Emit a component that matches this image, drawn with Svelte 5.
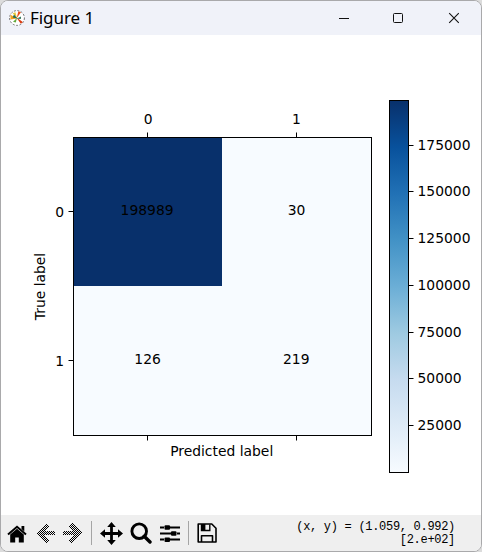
<script>
  const bars = [
    { y: 145.5, label: '175000' },
    { y: 191.5, label: '150000' },
    { y: 238.5, label: '125000' },
    { y: 285.5, label: '100000' },
    { y: 332.5, label: '75000' },
    { y: 378.5, label: '50000' },
    { y: 425.5, label: '25000' }
  ];
  const cells = [
    { x: 147.1, y: 215, v: '198989' },
    { x: 296.5, y: 215, v: '30' },
    { x: 147.6, y: 364, v: '126' },
    { x: 296.3, y: 364, v: '219' }
  ];
  const blues = ['#08306b', '#08519c', '#2171b5', '#4292c6', '#6baed6', '#9ecae1', '#c6dbef', '#deebf7', '#f7fbff'];
</script>

<div class="desktop">
  <div class="window">
    <header>
      <svg class="logo" width="16" height="16" viewBox="0 0 16 16">
        <circle cx="8" cy="8" r="7.4" fill="#fff" stroke="#666" stroke-width=".9" stroke-dasharray="2 1.5" />
        <path d="M8 8.5L1.5 4.8 1.5 9.6z" fill="#f3a01c" />
        <path d="M8 8L3.6 3.2 6.4 2.2z" fill="#e8c93c" />
        <path d="M7.6 8.3L9.4 1.2 12 2.2z" fill="#ea4d16" />
        <path d="M7.5 7.5L13.8 12 11.8 13.8z" fill="#d93a10" />
        <path d="M8 8L4 11.8 6.8 12.6z" fill="#63a83c" />
        <path d="M8 8.5L12 6.4 11.8 9zM8.5 8.5L3.6 7.4 5 4.6z" fill="#246d51" />
      </svg>
      <span class="title">Figure 1</span>
      <div class="controls">
        <svg width="12" height="12"><path d="M1 6.5h10" stroke="#111" /></svg>
        <svg width="12" height="12"><rect x="1.5" y="1.5" width="9" height="9" rx="1" fill="none" stroke="#111" /></svg>
        <svg width="12" height="12"><path d="M1.2 1.2l9.6 9.6M10.8 1.2L1.2 10.8" stroke="#111" stroke-width="1.1" /></svg>
      </div>
    </header>

    <svg class="plot" width="480" height="480" viewBox="1 35 480 480">
      <defs>
        <linearGradient id="blues" x1="0" y1="0" x2="0" y2="1">
          {#each blues as c, i}
            <stop offset={i / 8} stop-color={c} />
          {/each}
        </linearGradient>
      </defs>
      <rect x="73" y="137" width="299" height="299" fill="#f7fbff" />
      <rect x="73" y="137" width="149" height="149" fill="#08306b" />
      <rect x="73.5" y="137.5" width="298" height="298" fill="none" stroke="#000" />
      <path d="M147.5 132.5v5M296.5 132.5v5M147.5 435.5v5M296.5 435.5v5M68.5 211.5h5M68.5 360.5h5" stroke="#000" />
      <g text-anchor="middle">
        <text x="148.2" y="124">0</text>
        <text x="296.5" y="124">1</text>
        {#each cells as c}
          <text x={c.x} y={c.y}>{c.v}</text>
        {/each}
        <text x="221.7" y="456">Predicted label</text>
        <text transform="translate(45 286.5) rotate(-90)">True label</text>
      </g>
      <g text-anchor="end">
        <text x="64" y="217">0</text>
        <text x="64" y="366">1</text>
      </g>
      <rect x="389.5" y="100.5" width="19" height="372" fill="url(#blues)" stroke="#000" />
      {#each bars as b}
        <path d="M408.5 {b.y}h5" stroke="#000" />
        <text x="417.5" y={b.y + 4.5}>{b.label}</text>
      {/each}
    </svg>

    <footer>
      <svg class="home" width="20" height="22" viewBox="0 0 20 22">
        <path d="M1 12.6L10 4.8 19 12.6" fill="none" stroke="#000" stroke-width="2" />
        <path d="M14.5 4h2.8v5.4l-2.8-2.4zM3.2 12.6L10 6.8l6.8 5.8V20.5h-5v-5H8.2v5h-5z" fill="#000" />
      </svg>
      <svg class="back" width="19" height="22" viewBox="0 0 19 22" shape-rendering="crispEdges">
        <defs>
          <pattern id="dither" width="2" height="2" patternUnits="userSpaceOnUse">
            <path d="M0 0h1v1H0zM1 1h1v1H1z" fill="#000" />
          </pattern>
        </defs>
        <path d="M0 11L10 1l3.5 3L8.5 9H19v4H8.5l5 5-3.5 3z" fill="url(#dither)" />
      </svg>
      <svg class="forward" width="19" height="22" viewBox="0 0 19 22" shape-rendering="crispEdges">
        <path d="M19 11L9 1 5.500 4l5 5H0v4h10.500l-5 5L9 21z" fill="url(#dither)" />
      </svg>
      <i></i>
      <svg class="pan" width="23" height="23" viewBox="0 0 23 23">
        <path d="M11.5 3v17M3 11.500h17" stroke="#000" stroke-width="2.8" />
        <path d="M11.5 0l4.300 5H7.200zM11.500 23l4.300-5H7.200zM0 11.500l5-4.300v8.600zM23 11.500l-5-4.300v8.600z" fill="#000" />
      </svg>
      <svg class="zoom" width="22" height="22" viewBox="0 0 22 22">
        <circle cx="9.2" cy="9.2" r="7.3" fill="none" stroke="#000" stroke-width="2.9" />
        <path d="M14.2 14.2l5.8 5.8" stroke="#000" stroke-width="3.4" stroke-linecap="round" />
      </svg>
      <svg class="sliders" width="20" height="20" viewBox="0 0 20 20">
        <path d="M0 4.5h4M10 4.5h10M0 10.5h11M17 10.5h3M0 16.5h4M10 16.5h10" stroke="#000" stroke-width="1.8" />
        <rect x="4.5" y="2.2" width="5.5" height="4.6" rx="1" />
        <rect x="11" y="8.200" width="5.5" height="4.6" rx="1" />
        <rect x="4.5" y="14.400" width="5.5" height="4.6" rx="1" />
      </svg>
      <i></i>
      <svg class="save" width="20" height="20" viewBox="0 0 20 20">
        <path d="M1.2 1h13.6L19 5.2V19H1.2zM4.5 19v-6.2h11V19" fill="none" stroke="#000" stroke-width="1.6" stroke-linejoin="round" />
        <path d="M4.5 1.5v6h8.3v-6" fill="none" stroke="#000" stroke-width="1.4" />
        <rect x="4.2" y="1" width="4.2" height="6.6" />
      </svg>
      <div class="coords">
        <span>(x, y) = (1.059, 0.992)</span>
        <span>[2.e+02]</span>
      </div>
    </footer>
  </div>
</div>

<style>
  .desktop {
    width: 482px;
    height: 552px;
    background: #dcdcdc;
    overflow: hidden;
  }
  .window {
    box-sizing: border-box;
    width: 482px;
    height: 552px;
    border: 1px solid #a9a9ab;
    border-radius: 8px;
    overflow: hidden;
    background: #fff;
    display: flex;
    flex-direction: column;
  }
  header {
    height: 34px;
    background: #f0f2f9;
    display: flex;
    align-items: center;
    padding: 0 21px 0 8px;
  }
  .title {
    font: 17px 'Noto Sans', sans-serif;
    color: #000;
    margin-left: 5px;
    line-height: 34px;
    letter-spacing: -0.05px;
  }
  .controls {
    margin-left: auto;
    display: flex;
    gap: 43px;
  }
  .controls svg:nth-child(2) {
    margin-left: -1px;
    margin-right: 1px;
  }
  .plot {
    display: block;
    flex: none;
  }
  .plot text {
    font: 13.89px 'DejaVu Sans', sans-serif;
    fill: #000;
  }
  footer {
    height: 36px;
    background: #efefef;
    display: flex;
    align-items: center;
    padding: 0 26px 0 6px;
  }
  footer svg, footer i { flex: none; }
  footer i {
    width: 1px;
    height: 24px;
    background: #a5a5a5;
  }
  .back { margin-left: 9px; }
  .forward { margin-left: 8px; margin-right: 9px; }
  .pan { margin-left: 8px; }
  .zoom { margin-left: 7px; }
  .sliders { margin-left: 8px; margin-right: 8px; }
  .save { margin-left: 8px; }
  .coords {
    margin-left: auto;
    display: flex;
    flex-direction: column;
    align-items: flex-end;
    padding-top: 2px;
    font: 12px/13px 'Liberation Mono', monospace;
    letter-spacing: -0.3px;
    color: #000;
    white-space: pre;
  }
</style>
